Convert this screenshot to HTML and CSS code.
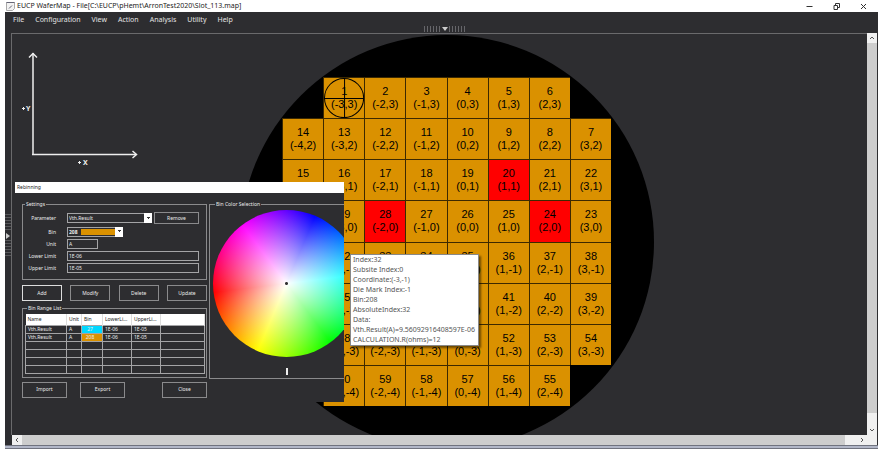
FILE: index.html
```html
<!DOCTYPE html>
<html lang="en">
<head>
    <meta charset="UTF-8">
    <meta name="viewport" content="width=device-width, initial-scale=1.0">
    <title>EUCP WaferMap</title>
    <link rel="stylesheet" href="styles.css">
</head>
<body>
    <header class="titlebar">
        <svg class="app-icon" viewBox="0 0 9 9"><path d="M1 .5h7.5v6l-2 2H.5v-8z" fill="#f2f2f2" stroke="#aaa"/><path d="M.5 .5h8" stroke="#667"/><path d="M3 6.500l3-3" stroke="#667"/></svg>
        <h1>EUCP WaferMap - File[C:\EUCP\pHemt\ArronTest2020\Slot_113.map]</h1>
        <div class="window-buttons">
            <button type="button" aria-label="Minimize"><svg viewBox="0 0 7 7"><path d="M.5 3.500h6"/></svg></button>
            <button type="button" aria-label="Restore"><svg viewBox="0 0 7 7"><path d="M1 2.500h3.500v4H1zM2.500 2.500v-2h4v4h-2"/></svg></button>
            <button type="button" aria-label="Close window"><svg viewBox="0 0 7 7"><path d="M1 1l5 5M6 1l-5 5"/></svg></button>
        </div>
    </header>
    <div class="app">
        <nav class="menubar">
            <a href="#">File</a>
            <a href="#">Configuration</a>
            <a href="#">View</a>
            <a href="#">Action</a>
            <a href="#">Analysis</a>
            <a href="#">Utility</a>
            <a href="#">Help</a>
            <div class="grip-top"><i></i><b></b><i></i></div>
        </nav>
        <div class="workspace">
            <div class="grip-left"><i></i><b></b><i></i></div>
            <main class="canvas">
                <svg class="axes" viewBox="0 0 120 120">
                    <path d="M13 3v102M12 104.500h104" stroke-width="1.500"/>
                    <path d="M9 7.500l4-4 4 4M112.500 101l4 3.500-4 3.500" stroke-width="1.500"/>
                    <path d="M2 58.500h3M3.500 57v3M58 112.500h3M59.500 111v3"/>
                    <text x="6" y="61">Y</text>
                    <text x="63" y="115">X</text>
                </svg>

                <div class="wafer" id="wafer"></div>

                <section class="dialog">
                    <h2>Rebinning</h2>
                    <div class="dialog-body">
                        <form class="left-pane">
                            <fieldset class="settings">
                                <legend>Settings</legend>
                                <label for="parameter">Parameter</label>
                                <div class="field-row">
                                    <span class="combo combo-parameter"><select id="parameter"><option>Vth.Result</option></select></span>
                                    <button type="button" class="remove">Remove</button>
                                </div>
                                <label for="bin">Bin</label>
                                <span class="combo combo-bin"><select id="bin"><option>208</option></select></span>
                                <label for="unit">Unit</label>
                                <input id="unit" class="unit" type="text" value="A">
                                <label for="lower">Lower Limit</label>
                                <input id="lower" type="text" value="1E-06">
                                <label for="upper">Upper Limit</label>
                                <input id="upper" type="text" value="1E-05">
                            </fieldset>
                            <div class="actions">
                                <button type="button" class="default">Add</button>
                                <button type="button">Modify</button>
                                <button type="button">Delete</button>
                                <button type="button">Update</button>
                            </div>
                            <fieldset class="bin-list">
                                <legend>Bin Range List</legend>
                                <table>
                                    <colgroup>
                                        <col class="col-name"><col class="col-unit"><col class="col-bin"><col class="col-limit"><col class="col-limit"><col>
                                    </colgroup>
                                    <thead>
                                        <tr><th>Name</th><th>Unit</th><th>Bin</th><th>LowerLi...</th><th>UpperLi...</th><th></th></tr>
                                    </thead>
                                    <tbody>
                                        <tr><td>Vth.Result</td><td>A</td><td class="bin-27">27</td><td>1E-06</td><td>1E-05</td><td></td></tr>
                                        <tr><td>Vth.Result</td><td>A</td><td class="bin-208">208</td><td>1E-06</td><td>1E-05</td><td></td></tr>
                                        <tr><td></td><td></td><td></td><td></td><td></td><td></td></tr>
                                        <tr><td></td><td></td><td></td><td></td><td></td><td></td></tr>
                                        <tr><td></td><td></td><td></td><td></td><td></td><td></td></tr>
                                        <tr><td></td><td></td><td></td><td></td><td></td><td></td></tr>
                                    </tbody>
                                </table>
                            </fieldset>
                            <div class="footer-buttons">
                                <button type="button">Import</button>
                                <button type="button">Export</button>
                                <button type="button" class="close">Close</button>
                            </div>
                        </form>
                        <fieldset class="color-pane">
                            <legend>Bin Color Selection</legend>
                            <div class="wheel"></div>
                            <input type="range" class="brightness" aria-label="Brightness" value="50">
                        </fieldset>
                    </div>
                </section>

                <div class="tooltip" role="tooltip">
                    <div>Index:32</div>
                    <div>Subsite Index:0</div>
                    <div>Coordinate:(-3,-1)</div>
                    <div>Die Mark Index:-1</div>
                    <div>Bin:208</div>
                    <div>AbsoluteIndex:32</div>
                    <div>Data:</div>
                    <div>Vth.Result(A)=9.56092916408597E-06</div>
                    <div>CALCULATION.R(ohms)=12</div>
                </div>
            </main>
            <div class="scroll-v">
                <svg viewBox="0 0 10 10"><path d="M3 6l2-2 2 2"/></svg>
                <div class="thumb"></div>
                <svg viewBox="0 0 10 10"><path d="M3 4l2 2 2-2"/></svg>
            </div>
            <div class="scroll-h">
                <svg viewBox="0 0 10 10"><path d="M6 3l-2 2 2 2"/></svg>
                <div class="thumb"></div>
                <svg viewBox="0 0 10 10"><path d="M4 3l2 2-2 2"/></svg>
            </div>
        </div>
        <div class="window-edge"></div>
    </div>
    <script src="wafer.js"></script>
</body>
</html>
```

FILE: styles.css
```css
* {
    box-sizing: border-box;
}
body {
    margin: 0;
    height: 100vh;
    display: flex;
    flex-direction: column;
    padding: 0 2px 2px 5px;
    background: #fff;
    font-family: "Noto Sans", "Open Sans", sans-serif;
    font-size: 7px;
    overflow: hidden;
}
button, input, select {
    font: inherit;
    color: inherit;
}
.titlebar {
    display: flex;
    align-items: center;
    height: 12px;
    flex: none;
    color: #222;
}
.titlebar h1 {
    margin: 0 auto 0 2px;
    font-size: 7px;
    font-weight: normal;
    line-height: 12px;
}
.app-icon {
    width: 9px;
    height: 9px;
    margin-left: 1px;
}
.window-buttons {
    display: flex;
    gap: 20px;
    padding-right: 11px;
}
.window-buttons button {
    display: flex;
    border: 0;
    padding: 0;
    background: none;
}
.window-buttons svg {
    width: 7px;
    height: 7px;
    fill: none;
    stroke: #333;
    stroke-width: 1;
}
.app {
    flex: 1;
    min-height: 0;
    display: flex;
    flex-direction: column;
    background: #2d2d30;
}
.window-edge {
    flex: none;
    height: 4px;
    border: solid #70737f;
    border-width: 1px 0;
    background: #b2b7c8;
}
.menubar {
    position: relative;
    display: flex;
    gap: 11px;
    height: 21px;
    flex: none;
    padding: 0 8px;
    line-height: 15px;
}
.menubar a {
    color: #e4e4e4;
    text-decoration: none;
}
.grip-top {
    position: absolute;
    left: 50%;
    bottom: 1px;
    margin-left: -18px;
    display: flex;
    align-items: center;
    gap: 1px;
}
.grip-top i {
    width: 17px;
    height: 6px;
    background: repeating-linear-gradient(90deg, #66666a 0 1px, transparent 1px 3px);
}
.grip-top b {
    border: 3px solid transparent;
    border-top: 4px solid #ccc;
    border-bottom: 0;
}
.workspace {
    flex: 1;
    min-height: 0;
    display: grid;
    grid-template: 1fr 10px / 6px 1fr 10px;
    padding-right: 1px;
}
.grip-left {
    display: flex;
    flex-direction: column;
    justify-content: center;
    align-items: center;
    gap: 1px;
    padding-top: 4px;
}
.grip-left i {
    width: 6px;
    height: 18px;
    background: repeating-linear-gradient(#58585b 0 1px, transparent 1px 3px);
}
.grip-left b {
    border: 3px solid transparent;
    border-left: 4px solid #ccc;
    border-right: 0;
}
.canvas {
    position: relative;
    overflow: hidden;
    border: 1px solid #6a6a6c;
    border-right: 0;
    border-bottom: 0;
}
.axes {
    position: absolute;
    left: 8px;
    top: 16px;
    width: 120px;
    height: 120px;
    fill: none;
    stroke: #eee;
}
.axes text {
    fill: #eee;
    stroke: none;
    font-size: 7px;
    font-weight: bold;
}

/* Scroll bars */
.scroll-v, .scroll-h {
    display: flex;
    background: #f0f0f0;
}
.scroll-v {
    flex-direction: column;
}
.scroll-h {
    grid-column: 2 / 4;
    margin-left: 1px;
    padding-right: 10px;
}
.scroll-v svg, .scroll-h svg {
    flex: none;
    width: 10px;
    height: 10px;
    fill: none;
    stroke: #555;
    stroke-width: 1;
}
.thumb {
    flex: 1;
    background: #cdcdcd;
}
.scroll-v .thumb {
    margin-bottom: 12px;
}
.scroll-h .thumb {
    margin-right: 12px;
}

/* Wafer map */
.wafer {
    position: absolute;
    left: 228px;
    top: 1px;
    width: 414px;
    height: 414px;
    padding: 42px 43px 43px 42px;
    border-radius: 50%;
    background: #000;
    display: grid;
    grid-template: repeat(8, 1fr) / repeat(8, 1fr);
}
.die {
    position: relative;
    display: flex;
    flex-direction: column;
    justify-content: center;
    border-left: 1px solid #3c2900;
    border-top: 1px solid #3c2900;
    background: #da9100;
    color: #000;
    font: 11px/13px "Liberation Sans", Arial, sans-serif;
    text-align: center;
}
.die.fail {
    background: #f00;
}
.die svg {
    position: absolute;
    inset: 0;
    fill: none;
    stroke: #000;
}

/* Rebinning dialog */
.dialog {
    position: absolute;
    left: 3px;
    top: 148px;
    width: 329px;
    overflow: hidden;
    background: #2d2d30;
    color: #ececec;
    font-size: 5px;
}
.dialog h2 {
    margin: 0;
    padding-left: 2px;
    background: #fff;
    color: #222;
    font-size: 5px;
    font-weight: normal;
    line-height: 11px;
}
.dialog-body {
    display: flex;
    gap: 2px;
    padding: 8px 0 4px 7px;
}
.left-pane {
    flex: none;
    width: 185px;
}
.dialog fieldset {
    margin: 0;
    min-width: 0;
    border: 1px solid #8a8a8c;
}
.dialog legend {
    margin-left: 2px;
    padding: 0 1px;
    line-height: 6px;
}
.dialog button {
    border: 1px solid #8a8a8c;
    padding: 0;
    background: #2d2d30;
    line-height: 13px;
}
.dialog button.default {
    border-color: #ddd;
}
.settings {
    display: grid;
    grid-template-columns: 33px 1fr;
    grid-template-rows: 12px 11px repeat(3, 10px);
    column-gap: 11px;
    row-gap: 2px;
    align-items: center;
    padding: 5px 7px 6px 0;
}
.settings label {
    text-align: right;
}
.field-row {
    display: flex;
    justify-content: space-between;
    align-items: center;
}
.settings .remove {
    width: 45px;
    height: 12px;
    line-height: 10px;
}
.settings input, .settings select {
    display: block;
    width: 100%;
    height: 10px;
    margin: 0;
    padding: 0 0 0 1px;
    border: 1px solid #a4a4a6;
    border-radius: 0;
    background-color: #2d2d30;
    appearance: none;
    line-height: 8px;
}
.settings .unit {
    width: 31px;
}
.combo {
    position: relative;
    display: block;
}
.combo::after {
    content: "";
    position: absolute;
    right: 0;
    top: 0;
    width: 8px;
    height: 10px;
    background: conic-gradient(from -45deg at 50% 60%, #333 90deg, #fff 0) center / 3px 3px no-repeat, #fff;
    pointer-events: none;
}
.combo-parameter {
    width: 85px;
}
.combo-bin {
    width: 56px;
}
.combo-bin select {
    background-image: linear-gradient(#da9100, #da9100);
    background-size: 34px 6px;
    background-position: 13px center;
    background-repeat: no-repeat;
    font-weight: bold;
}
.actions {
    display: flex;
    justify-content: space-between;
    margin: 5px 0 4px;
}
.actions button {
    width: 40px;
    height: 16px;
}
.dialog .bin-list {
    padding: 3px 1px 3px 2px;
}
.bin-list table {
    width: 100%;
    table-layout: fixed;
    border-collapse: collapse;
}
.col-name {
    width: 41px;
}
.col-unit {
    width: 15px;
}
.col-bin {
    width: 21px;
}
.col-limit {
    width: 29px;
}
.bin-list th {
    height: 11px;
    padding: 0 0 0 2px;
    border-right: 1px solid #ddd;
    background: #fff;
    color: #222;
    font-weight: normal;
    line-height: 9px;
    text-align: left;
}
.bin-list td {
    height: 8px;
    padding: 0 0 0 2px;
    border: 1px solid #a4a4a6;
    line-height: 7px;
}
.bin-list .bin-27, .bin-list .bin-208 {
    padding: 0 4px 0 0;
    text-align: center;
}
.bin-list .bin-27 {
    background: #00d8ff;
}
.bin-list .bin-208 {
    background: #da9100;
}
.footer-buttons {
    display: flex;
    gap: 13px;
    margin-top: 4px;
}
.footer-buttons button {
    width: 45px;
    height: 16px;
}
.footer-buttons .close {
    margin-left: auto;
}
.dialog .color-pane {
    flex: none;
    width: 155px;
    align-self: flex-start;
    padding: 3px 3px 1px;
}
.wheel {
    width: 147px;
    height: 147px;
    border-radius: 50%;
    background:
        radial-gradient(circle, #333 0 1px, transparent 2px),
        radial-gradient(closest-side, #fff, rgba(255, 255, 255, 0)),
        conic-gradient(from 23deg, #00f, #0ff, #0f0, #ff0, #f00, #f0f, #00f);
}
.brightness {
    display: block;
    width: 147px;
    height: 8px;
    margin: 10px 0 2px;
    appearance: none;
    background: none;
}
.brightness::-webkit-slider-thumb {
    appearance: none;
    width: 2px;
    height: 7px;
    background: #eee;
}

.tooltip {
    position: absolute;
    left: 338px;
    top: 220px;
    padding: 0 3px 0 2px;
    border: 1px solid #888;
    background: #fff;
    box-shadow: 2px 2px 2px rgba(0, 0, 0, 0.5);
    color: #555;
    font-size: 7px;
    line-height: 10px;
    white-space: nowrap;
}
```

FILE: wafer.js
```js
// Each row: y coordinate, first x, index of the first die, number of dies, index step
const rows = [
    [3, -3, 1, 6, 1],
    [2, -4, 14, 8, -1],
    [1, -4, 15, 8, 1],
    [0, -4, 30, 8, -1],
    [-1, -4, 31, 8, 1],
    [-2, -4, 46, 8, -1],
    [-3, -4, 47, 8, 1],
    [-4, -3, 60, 6, -1]
];
const failed = [20, 24, 28];
const wafer = document.getElementById('wafer');

rows.forEach(([y, startX, first, count, step], row) => {
    for (let i = 0; i < count; i++) {
        const x = startX + i;
        const index = first + i * step;
        const die = document.createElement('div');
        die.className = failed.includes(index) ? 'die fail' : 'die';
        die.style.gridArea = `${row + 1} / ${x + 5}`;
        die.innerHTML = `<span>${index}</span><span>(${x},${y})</span>`;
        if (index === 1) {
            die.innerHTML += '<svg viewBox="0 0 40 40"><circle cx="20" cy="20" r="19.5"/><path d="M20.500 0v40M0 20.500h40"/></svg>';
        }
        wafer.appendChild(die);
    }
});
```
